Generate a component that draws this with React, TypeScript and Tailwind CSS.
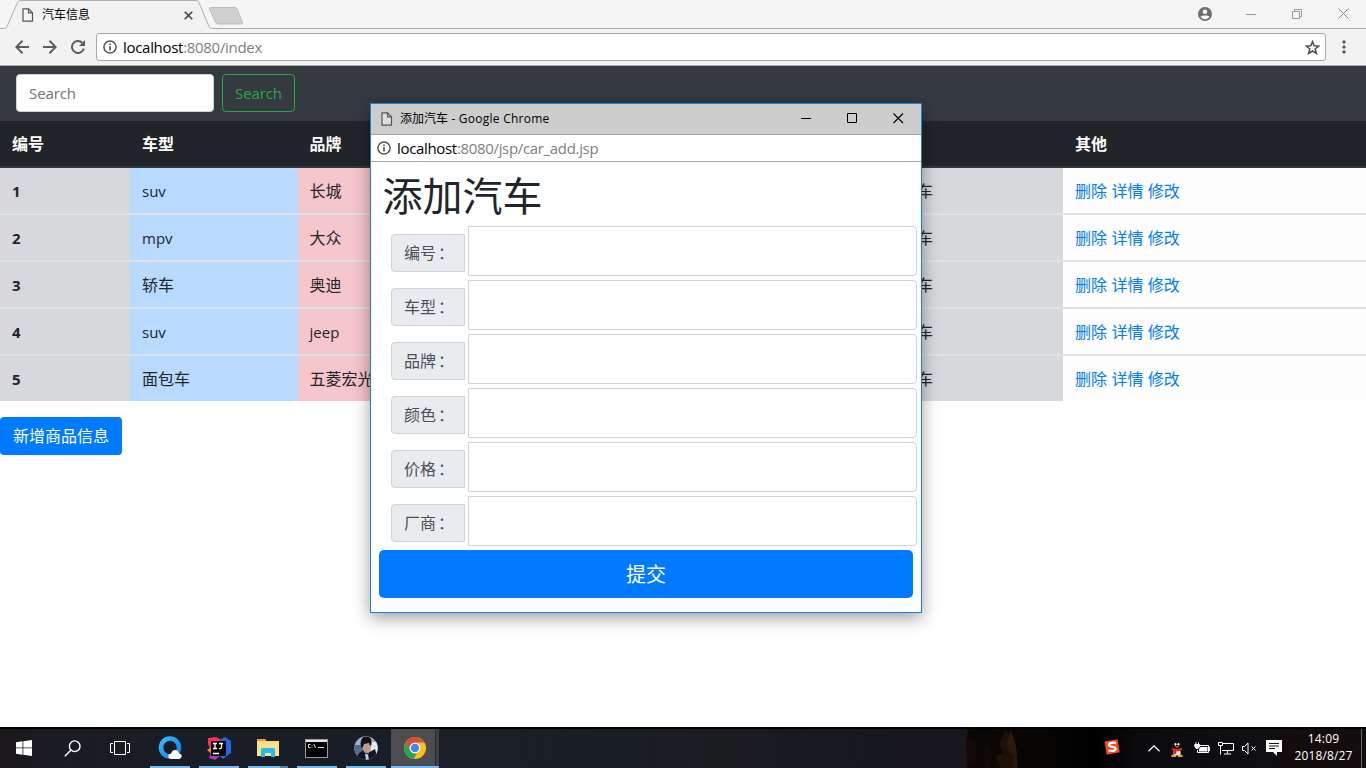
import React from "react";

const CJK = "font-['Open_Sans','Noto_Sans_CJK_SC',sans-serif]";

const isLatin = (s: string) => /^[\x00-\x7f]+$/.test(s);

const cars = [
  { id: "1", type: "suv", brand: "长城", maker: "长城汽车" },
  { id: "2", type: "mpv", brand: "大众", maker: "大众汽车" },
  { id: "3", type: "轿车", brand: "奥迪", maker: "奥迪汽车" },
  { id: "4", type: "suv", brand: "jeep", maker: "吉普汽车" },
  { id: "5", type: "面包车", brand: "五菱宏光", maker: "五菱汽车" },
];

const COLS = "grid grid-cols-[130px_167.5px_191.5px_184px_184px_206px_1fr]";

function PageIcon() {
  return (
    <svg width="12" height="14" viewBox="0 0 12 14" fill="none" stroke="#555" strokeWidth="1.2">
      <path d="M1 .8h5.5L10.5 4.8V13.2H1z" fill="#fafafa" fillOpacity=".4" />
      <path d="M6.5 .8v4h4" />
    </svg>
  );
}

function InfoIcon() {
  return (
    <svg width="14" height="14" viewBox="0 0 14 14" fill="none" stroke="#555">
      <circle cx="7" cy="7" r="6.1" strokeWidth="1.5" />
      <path d="M7 6.2v4.2M7 3.4v1.6" strokeWidth="1.7" />
    </svg>
  );
}

function TabStrip() {
  return (
    <div className="relative flex h-[29px] shrink-0 bg-[#f5f5f5]">
      <svg className="absolute inset-0" width="1366" height="29" viewBox="0 0 1366 29">
        <path d="M5 29 Q7 28 8 25.5 L17.5 2.5 Q18.5 .5 20.5 .5 H196 Q198 .5 199 2.5 L208.500 25.500 Q210 28.500 212 28.500 V29z" fill="#f2f2f2" />
        <path d="M0 28.500H4 Q6 28.500 7 26.500 L17.500 2.500 Q18.500 .5 20.500 .5 H196 Q198 .5 199 2.500 L209 26.500 Q210 28.500 212 28.500 H1366" fill="none" stroke="#aeaeae" />
        <path d="M210.500 7.500H235Q236.500 7.500 237.200 9L242.500 22.500Q243 24 241.500 24H218Q216.300 24 215.600 22.500L209.500 9Q209 7.500 210.500 7.500z" fill="#d0d0d0" stroke="#bcbcbc" />
      </svg>
      <div className="relative flex w-[212px] items-center pl-[22px]">
        <PageIcon />
        <span className="ml-2 text-[12px] leading-[28px] text-black">汽车信息</span>
        <svg className="ml-auto mr-[19px] mt-px" width="9" height="9" viewBox="0 0 9 9" stroke="#444" strokeWidth="1.6">
          <path d="M.7 .7l7.600 7.600M8.300 .7L.7 8.300" />
        </svg>
      </div>
      <div className="relative ml-auto flex w-[168px] items-center pb-[2px]">
        <svg width="14" height="14" viewBox="0 0 14 14">
          <circle cx="7" cy="7" r="7" fill="#6e6e6e" />
          <circle cx="7" cy="4.800" r="2.300" fill="#f5f5f5" />
          <path d="M2.500 9.800C4 7.900 10 7.900 11.500 9.800 10.500 11.300 9 12.200 7 12.200S3.500 11.300 2.500 9.800z" fill="#f5f5f5" />
        </svg>
        <svg className="ml-[34px]" width="10" height="10" viewBox="0 0 10 10" stroke="#999">
          <path d="M0 5.500h10" />
        </svg>
        <svg className="ml-[36px]" width="10" height="10" viewBox="0 0 10 10" stroke="#999" fill="none">
          <path d="M.5 2.500h7v7h-7zM2.500 2.500V.5h7v7h-2" />
        </svg>
        <svg className="ml-[36px]" width="11" height="11" viewBox="0 0 11 11" stroke="#888">
          <path d="M.5 .5l10 10M10.500 .5L.5 10.500" />
        </svg>
      </div>
    </div>
  );
}

function Toolbar() {
  return (
    <div className="flex h-[37px] shrink-0 items-center border-b border-[#aeaeae] bg-[#f2f2f2]">
      <svg className="ml-[15px]" width="14" height="14" viewBox="0 0 14 14" fill="none" stroke="#5a5c60" strokeWidth="2">
        <path d="M14 7H1.500M7.500 .8L1.300 7l6.200 6.200" />
      </svg>
      <svg className="ml-[14px]" width="14" height="14" viewBox="0 0 14 14" fill="none" stroke="#5a5c60" strokeWidth="2">
        <path d="M0 7h12.500M6.500 .8L12.700 7l-6.200 6.200" />
      </svg>
      <svg className="ml-[14px]" width="14" height="14" viewBox="0 0 14 14" fill="none" stroke="#5a5c60" strokeWidth="2">
        <path d="M12.800 8.500A6 6 0 1 1 11.300 2.800" />
        <path d="M14 0v6H8z" fill="#5a5c60" stroke="none" />
      </svg>
      <div className="ml-[11px] flex h-[28px] w-[1230px] items-center rounded-[3px] border border-[#a8a8a8] bg-white pl-[6px] pr-[5px]">
        <InfoIcon />
        <span className="ml-[6px] text-[15px] leading-[24px] tracking-[-0.3px] text-[#808080]">
          <span className="text-black">localhost</span>:8080/index
        </span>
        <svg className="ml-auto" width="15" height="15" viewBox="0 0 15 15" fill="none" stroke="#4f4f4f" strokeWidth="1.500">
          <path d="M7.500 1.600l1.700 4.200 4.500.3-3.500 2.900 1.200 4.400-3.900-2.400-3.900 2.400 1.200-4.400L1.300 6.100l4.500-.3z" />
        </svg>
      </div>
      <svg className="ml-[16px]" width="4" height="14" viewBox="0 0 4 14" fill="#5a5c60">
        <circle cx="2" cy="2" r="1.700" />
        <circle cx="2" cy="7" r="1.700" />
        <circle cx="2" cy="12" r="1.700" />
      </svg>
    </div>
  );
}

function Cell({ value, className }: { value?: string; className: string }) {
  return (
    <div className={`flex items-center overflow-hidden whitespace-nowrap pl-3 ${value && isLatin(value) ? "text-[15px]" : "text-base"} ${className}`}>
      {value && <span className="pt-px">{value}</span>}
    </div>
  );
}

function CarTable() {
  return (
    <div className="shrink-0 text-[#212529]">
      <div className={`${COLS} h-[48px] border-b-2 border-t border-[#32383e] bg-[#212529] text-base font-bold text-white`}>
        {["编号", "车型", "品牌", "", "", "", "其他"].map((h, i) => (
          <div key={i} className="flex items-center pl-3">{h}</div>
        ))}
      </div>
      {cars.map((c, i) => (
        <div key={c.id} className={`${COLS} ${i ? "h-[47px] border-t-2 border-[#dee2e6]" : "h-[45px]"}`}>
          <Cell value={c.id} className="bg-[#d6d8db] font-bold" />
          <Cell value={c.type} className="bg-[#b8daff]" />
          <Cell value={c.brand} className="bg-[#f5c6cb]" />
          <Cell className="bg-[#c3e6cb]" />
          <Cell className="bg-[#ffeeba]" />
          <Cell value={c.maker} className="bg-[#d6d8db]" />
          <div className="flex items-center gap-[4.4px] bg-[#fdfdfe] pl-3 pt-px text-base text-[#007bff]">
            <a>删除</a>
            <a>详情</a>
            <a>修改</a>
          </div>
        </div>
      ))}
    </div>
  );
}

function Popup() {
  return (
    <div className="absolute left-[370px] top-[103px] flex h-[510px] w-[552px] flex-col border border-[#1883d7] bg-white shadow-[0_5px_16px_rgba(0,0,0,0.38)]">
      <div className="flex h-[31px] shrink-0 items-center border-b border-[#a0a0a0] bg-[#cdcdcd] pb-px pl-[10px]">
        <PageIcon />
        <span className="ml-[7px] text-[12px] tracking-[0.25px] text-black"><span className="tracking-normal">添加汽车</span> - Google Chrome</span>
        <svg className="ml-auto" width="11" height="11" viewBox="0 0 11 11" stroke="#000"><path d="M0 5.500h10" /></svg>
        <svg className="ml-[35px]" width="11" height="11" viewBox="0 0 11 11" fill="none" stroke="#000"><path d="M.5 .5h9v9h-9z" /></svg>
        <svg className="ml-[35px] mr-[17px]" width="11" height="11" viewBox="0 0 11 11" stroke="#000" strokeWidth="1.100"><path d="M.5 .5l9.500 9.500M10 .5L.5 10" /></svg>
      </div>
      <div className="flex h-[27px] shrink-0 items-center border-b border-[#a8a8a8] pl-[6px]">
        <InfoIcon />
        <span className="ml-[6px] text-[15px] leading-[24px] tracking-[-0.33px] text-[#808080]">
          <span className="text-black">localhost</span>:8080/jsp/car_add.jsp
        </span>
      </div>
      <h1 className="mt-[10px] h-[48px] shrink-0 pl-[11.5px] text-[40px] leading-[48px] text-[#212529]">添加汽车</h1>
      <div className="mt-[6px] flex shrink-0 flex-col gap-1">
        {["编号", "车型", "品牌", "颜色", "价格", "厂商"].map((label) => (
          <label key={label} className="flex h-[50px] items-center pl-5">
            <span className="mt-[4px] flex h-[38px] w-[74px] items-center rounded-l-[4px] border border-[#ced4da] bg-[#e9ecef] pl-3 text-base text-[#495057]">
              {label}<span className="-ml-[2px] font-['Noto_Sans_CJK_TC',sans-serif]">：</span>
            </span>
            <input className="ml-[3px] h-[50px] w-[449px] rounded-r-[4px] border border-[#ced4da] bg-white px-3 outline-none" />
          </label>
        ))}
      </div>
      <button className="ml-2 mt-1 h-[48px] w-[534px] shrink-0 rounded-[5px] bg-[#007bff] pt-[2px] text-[20px] text-white">提交</button>
    </div>
  );
}

function AppSlot({ children, stacked }: { children: React.ReactNode; stacked?: boolean }) {
  return (
    <div className="mr-[9px] flex h-[39px] w-[40px] flex-col items-center">
      <div className="flex h-[37px] items-center pt-px">{children}</div>
      <div className="flex h-[2px] w-full bg-[#76b9ed]">
        {stacked && <span className="ml-auto w-[8px] bg-[#557fa3]" />}
      </div>
    </div>
  );
}

function Taskbar() {
  return (
    <div className="relative flex h-[41px] shrink-0 border-t-2 border-black bg-[linear-gradient(90deg,#1b171b_0,#191c24_60px,#1a1e28_440px,#191d24_640px,#1b1c20_720px,#191921_790px,#171721_880px,#19171d_966px,#0b0705_969px,#070504_1040px,#000_1096px,#0b0b0f_1140px,#100f14_1272px,#130c0c_1280px,#120d0e_100%)] text-white">
      <svg className="absolute left-[964px] top-0" width="76" height="39" viewBox="0 0 76 39">
        <path d="M4 5Q0 18 5 35l6 2 2-20z" fill="#160805" />
        <path d="M42 0q5 14 9 19 3 10 1 20H37l-6-12 8-3-4-10z" fill="#1f1007" />
        <path d="M46 2q8 10 7 37h-5l2-12q-6-6-7-13z" fill="#2a190a" />
        <path d="M21 14l8 12-4 13h-6z" fill="#120a06" />
      </svg>
      <div className="relative flex h-[39px] w-[48px] items-center justify-center pb-px">
        <svg width="16" height="16" viewBox="0 0 16 16" fill="#fff"><path d="M0 2.200L6.500 1.300V7.500H0zM7.300 1.200L16 0V7.500H7.300zM0 8.300H6.500V14.700L0 13.800zM7.300 8.300H16V16L7.300 14.800z" /></svg>
      </div>
      <div className="relative flex w-[48px] items-center justify-center pb-px">
        <svg width="17" height="17" viewBox="0 0 17 17" fill="none" stroke="#fff" strokeWidth="1.400"><circle cx="10.700" cy="6.200" r="5.300" /><path d="M7 10L.8 16.200" /></svg>
      </div>
      <div className="relative flex w-[48px] items-center justify-center pb-px">
        <svg width="20" height="14" viewBox="0 0 20 14" fill="none" stroke="#fff"><path d="M4.500 .5h11v13h-11zM3 2.500H.5v9H3M17 2.500h2.500v9H17" /></svg>
      </div>
      <div className="relative ml-[6px] flex">
        <AppSlot>
          <svg width="24" height="24" viewBox="0 0 24 24">
            <defs><linearGradient id="q" x1="0" y1="0" x2="1" y2="1"><stop offset="0" stopColor="#35bdf8" /><stop offset="1" stopColor="#0d7df0" /></linearGradient></defs>
            <circle cx="12" cy="11.500" r="9" fill="none" stroke="url(#q)" strokeWidth="4.500" />
            <path d="M13 23q-3-.5-2.700-3.200.4-2.300 2.900-2.400.8-3.400 4-3.400 3.200 0 3.800 3.600 2.800.4 2.700 2.900-.4 2.300-2.700 2.500z" fill="#fff" />
          </svg>
        </AppSlot>
        <AppSlot>
          <svg width="24" height="24" viewBox="0 0 24 24">
            <path d="M1 8l0-6 8-1 6 3 0 7-11 4z" fill="#fc3058" />
            <path d="M0 14l6-4 5 7-4 3z" fill="#f78b2c" />
            <path d="M2 22l3-10 9 7-6 5z" fill="#a33bb5" />
            <path d="M14 3l4-2 6 4v12l-8 6-6-5z" fill="#2168e5" />
            <rect x="4" y="5" width="15" height="15" fill="#060606" />
            <path d="M6 7.500h4M8 7.500v5M6 12.500h4M12 7.500h4M14.500 7.500v3.700q0 1.500-1.500 1.500h-1M6 17.500h6" stroke="#fff" strokeWidth="1.300" fill="none" />
          </svg>
        </AppSlot>
        <AppSlot stacked>
          <svg width="22" height="20" viewBox="0 0 22 20">
            <path d="M0 1h8l1.500 2H22v15H0z" fill="#f8d775" />
            <path d="M0 1h2.500v2H0zM2.500 1H8l1 2H2.500z" fill="#dba73a" />
            <path d="M0 4h22v14H0z" fill="#fbe08a" />
            <path d="M4 19v-7q0-2 2-2h10q2 0 2 2v7h-4v-4H8v4z" fill="#25b9f0" />
          </svg>
        </AppSlot>
        <AppSlot>
          <svg className="-ml-[2px]" width="23" height="19" viewBox="0 0 23 19">
            <rect x=".5" y=".5" width="22" height="18" fill="#000" stroke="#9b9b9b" />
            <path d="M1 1h21v2H1z" fill="#e8e8e8" />
            <path d="M5.500 5.500H3.500v3h2M7 6v.8M7 8v.8M9 5l1.500 4M13 8.500h6" stroke="#ddd" fill="none" />
          </svg>
        </AppSlot>
        <AppSlot>
          <svg width="24" height="24" viewBox="0 0 24 24">
            <defs><clipPath id="av"><circle cx="12" cy="12" r="11.700" /></clipPath></defs>
            <g clipPath="url(#av)">
              <path d="M0 0h24v24H0z" fill="#9fb4c8" />
              <path d="M0 9h9v15H0z" fill="#4d6e8e" />
              <path d="M17 6h7v12h-7z" fill="#dfe8ef" />
              <path d="M1 24l4-7 5-3 4 3 7-4 3 11z" fill="#10172a" />
              <path d="M8 7l7-1 1.500 5-2 6.500-4-1-2.500-5z" fill="#c09a8b" />
              <path d="M7 11Q5 1 12 .5q6.500-.5 5.500 8l-1.500 1.500-1-3-5 1-1.500 4z" fill="#10131e" />
              <path d="M11 17.500l3 1 1 5.500h-3z" fill="#cbd4de" />
            </g>
          </svg>
        </AppSlot>
      </div>
      <div className="relative ml-[-4px] flex h-[39px] w-[48px] flex-col bg-[linear-gradient(90deg,#4b4d50_44px,#292b30_44px,#292b30_45px,#3e4044_45px)]">
        <div className="flex h-[37px] items-center pl-[12px]">
          <svg width="24" height="24" viewBox="0 0 24 24">
            <circle cx="12" cy="12" r="11" fill="#fbc116" />
            <path d="M2.500 6.500A11 11 0 0 1 21.500 6.500H12a5.500 5.500 0 0 0-4.800 8.200z" fill="#df4b3e" />
            <path d="M2.500 6.500L7.200 14.700A5.500 5.500 0 0 0 13.700 17.200L10.800 22.900A11 11 0 0 1 2.500 6.500z" fill="#24a35a" />
            <circle cx="12" cy="12" r="5.300" fill="#fff" />
            <circle cx="12" cy="12" r="4.200" fill="#4386f5" />
          </svg>
        </div>
        <div className="h-[2px] bg-[#76b9ed]" />
      </div>
      <div className="relative ml-auto flex h-[39px] items-center pb-px">
        <svg className="-mt-[2px]" width="16" height="16" viewBox="0 0 16 16">
          <path d="M.5 2.500L13.500 .3 15.700 13.300 2.700 15.700z" fill="#f04c20" />
          <path d="M12 4.200C9 3 4.800 4 5 6.200 5.300 8.500 11.500 7 11.700 9.700 11.700 12 7.500 12.500 4.700 11.200" fill="none" stroke="#fff" strokeWidth="2.200" />
        </svg>
        <svg className="ml-[28px] mt-px" width="12" height="7" viewBox="0 0 12 7" fill="none" stroke="#fff" strokeWidth="1.300"><path d="M.5 6.300L6 .9l5.500 5.400" /></svg>
        <svg className="ml-[10px] mt-px" width="14" height="16" viewBox="0 0 14 16">
          <path d="M2.700 6Q2.500 0 7 0t4.300 6L13.500 11.500 12 13 2 13 .5 11.500z" fill="#050505" stroke="#444" strokeWidth=".4" />
          <path d="M3.500 10h7v3.500Q7 15.500 3.500 13.500z" fill="#fff" />
          <ellipse cx="5.500" cy="3.300" rx="1" ry="1.400" fill="#fff" /><ellipse cx="8.500" cy="3.300" rx="1" ry="1.400" fill="#fff" />
          <path d="M4.500 5.500h5L7 6.800zM1.500 13.700h4.500V16h-4.500zM8 13.700h4.500V16H8z" fill="#f9a51a" />
          <path d="M2.500 6.800Q7 9 11.500 6.800l.7 2.200Q9.500 10.500 6.300 10.300V13H3.800v-3L1.800 9z" fill="#e92222" />
        </svg>
        <svg className="ml-[10px]" width="16" height="12" viewBox="0 0 16 12" fill="none" stroke="#fff">
          <path d="M6 3.500h8.500v7H3.500V8" /><path d="M15.500 5v4" /><path d="M6.500 5h7v4.500h-8.500V7z" fill="#fff" stroke="none" /><path d="M.8 2.500h4.700v2L4 6.500H2.200L.8 4.500zM2 .3v2M4.500 .3v2" fill="#fff" />
        </svg>
        <svg className="ml-[8px] mt-px" width="16" height="13" viewBox="0 0 16 13" fill="none" stroke="#fff">
          <path d="M5 1.500h10.500v7H4M9.500 8.500v3M6 12h7M.5 .5h4v3h-4zM2.500 3.500v9" />
        </svg>
        <svg className="ml-[8px]" width="15" height="13" viewBox="0 0 15 13" fill="none" stroke="#fff">
          <path d="M.5 4.500h2l3.500-3.500v11L2.500 8.500h-2zM9.500 4.500l4 4M13.500 4.500l-4 4" />
        </svg>
        <svg className="ml-[9px]" width="16" height="16" viewBox="0 0 16 16" fill="#fff">
          <path d="M0 0h16v12H11v4l-4-4H0z" /><path d="M3 3.500h10M3 6h10M3 8.500h6" stroke="#111" />
        </svg>
        <div className="ml-[11px] w-[61px] pb-[2px] text-center text-[12px] leading-[17px] tracking-[0.15px]">
          <div>14:09</div>
          <div>2018/8/27</div>
        </div>
        <div className="mb-[-1px] ml-[7px] mr-[4px] h-[39px] w-px bg-[#66686b]" />
      </div>
    </div>
  );
}

export default function App() {
  return (
    <div className={`relative flex h-[768px] w-[1366px] flex-col overflow-hidden bg-white ${CJK}`}>
      <TabStrip />
      <Toolbar />
      <nav className="flex h-[54px] shrink-0 items-center bg-[#343a40] pl-4 text-[15px]">
        <input className="h-[38px] w-[198px] rounded-[4px] border border-[#ced4da] bg-white px-3 tracking-[-0.1px] outline-none placeholder:text-[#6c757d]" placeholder="Search" />
        <button className="ml-2 h-[38px] w-[73px] rounded-[4px] border border-[#28a745] tracking-[-0.1px] text-[#28a745]">Search</button>
      </nav>
      <CarTable />
      <button className="mt-4 h-[38px] w-[122px] shrink-0 rounded-[4px] bg-[#007bff] text-base text-white">新增商品信息</button>
      <div className="grow" />
      <Taskbar />
      <Popup />
    </div>
  );
}
